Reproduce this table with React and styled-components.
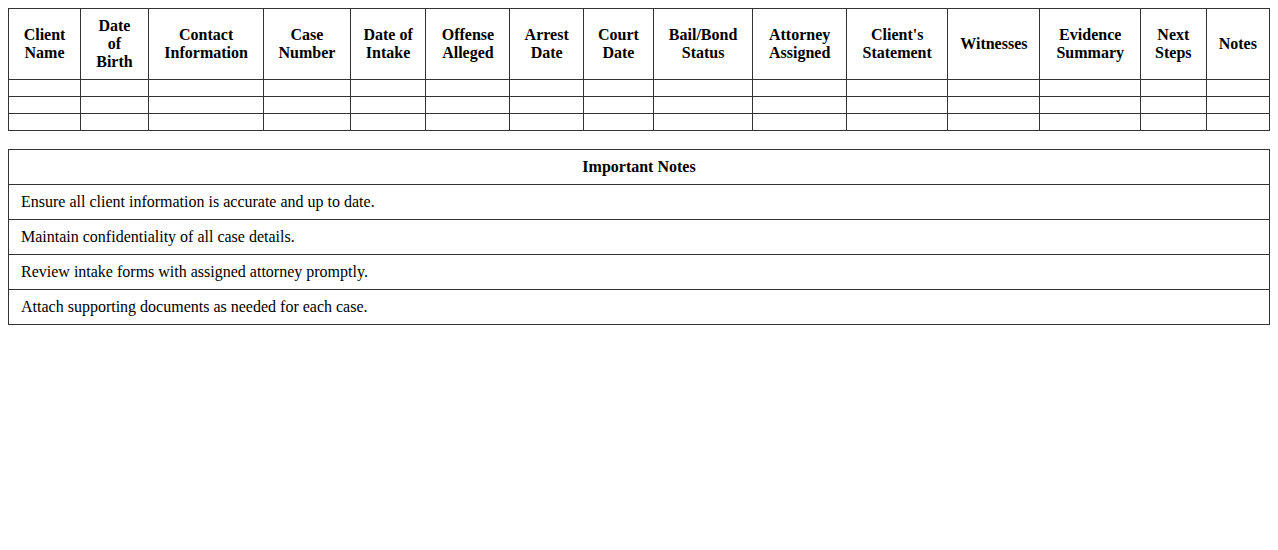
import styled, { createGlobalStyle } from 'styled-components';

const GlobalStyle = createGlobalStyle`
    body {
        margin: 8px;
        font-family: "Liberation Serif", "Times New Roman", serif;
        font-size: 16px;
        color: #000;
        background: #fff;
    }
`

const IntakeTable = styled.table`
    width: 100%;
    border-collapse: collapse;
    margin-bottom: 18px;
`
const HeadCell = styled.th`
    border: 1px solid #333;
    padding: 8px 12px;
    font-weight: bold;
    text-align: center;
    vertical-align: middle;
`
const Cell = styled.td`
    border: 1px solid #333;
    padding: 8px 12px;
`
const NotesTable = styled.table`
    width: 100%;
    border-collapse: collapse;
`
const NotesTitle = styled.th`
    border: 1px solid #333;
    padding: 8px 12px;
    text-align: center;
    font-weight: bold;
`
const NoteCell = styled.td`
    border: 1px solid #333;
    padding: 8px 12px;
    text-align: left;
`

const columns = [
    'Client Name',
    'Date of Birth',
    'Contact Information',
    'Case Number',
    'Date of Intake',
    'Offense Alleged',
    'Arrest Date',
    'Court Date',
    'Bail/Bond Status',
    'Attorney Assigned',
    "Client's Statement",
    'Witnesses',
    'Evidence Summary',
    'Next Steps',
    'Notes',
];

const notes = [
    'Ensure all client information is accurate and up to date.',
    'Maintain confidentiality of all case details.',
    'Review intake forms with assigned attorney promptly.',
    'Attach supporting documents as needed for each case.',
];

const App = () => {
    return (
        <>
            <GlobalStyle />
            <IntakeTable>
                <thead>
                    <tr>
                        {columns.map((c) => <HeadCell key={c}>{c}</HeadCell>)}
                    </tr>
                </thead>
                <tbody>
                    {[0, 1, 2].map((r) => (
                        <tr key={r}>
                            {columns.map((c) => <Cell key={c}></Cell>)}
                        </tr>
                    ))}
                </tbody>
            </IntakeTable>

            <NotesTable>
                <thead>
                    <tr><NotesTitle>Important Notes</NotesTitle></tr>
                </thead>
                <tbody>
                    {notes.map((n) => (
                        <tr key={n}><NoteCell>{n}</NoteCell></tr>
                    ))}
                </tbody>
            </NotesTable>
        </>
    );
}

export default App;
